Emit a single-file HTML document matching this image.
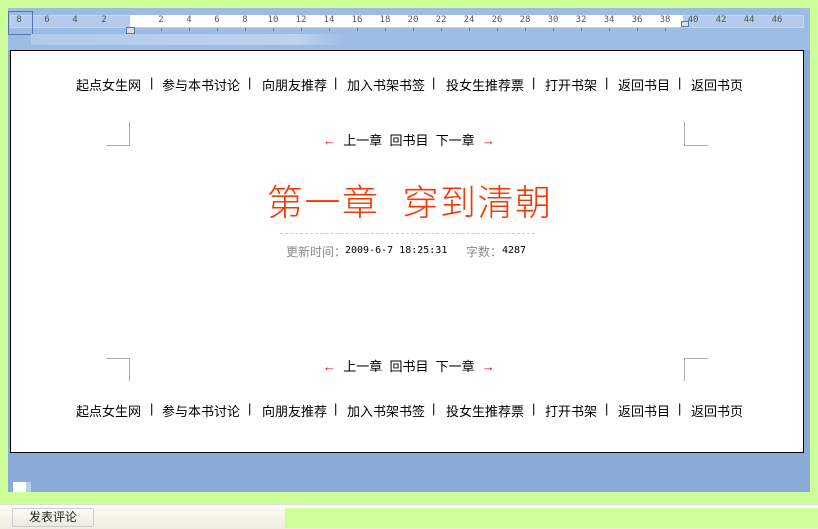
<!DOCTYPE html>
<html><head><meta charset="utf-8"><style>
*{margin:0;padding:0}
body{width:818px;height:528px;background:#ccff99;position:relative;overflow:hidden;font-family:"Liberation Sans","Noto Sans CJK SC","WenQuanYi Zen Hei",sans-serif}
.a{position:absolute}
.frame{left:8px;top:8px;width:802px;height:484px;background:#8aabd6}
.top{left:8px;top:8px;width:802px;height:42px;background:#9dbce4}
.num{position:absolute;top:15px;font-size:9px;color:#555;font-family:"DejaVu Sans Mono","Liberation Mono",monospace;transform:translateX(-50%)}
.tick{position:absolute;top:28px;width:1px;height:3px;background:#777}
.page{left:10px;top:50px;width:792px;height:401px;background:#fff;border:1px solid #000}
.nav{font-size:13px;color:#000;top:75px;white-space:nowrap}
.nav2{top:401px}
.cm{background:#aaa}
.mono{font-family:"DejaVu Sans Mono","Liberation Mono",monospace;font-size:10px}
</style></head><body>
<div class="a frame"></div>
<div class="a top"></div>
<div class="a" style="left:10px;top:15px;width:792px;height:11px;background:#b4cbeb;border:1px solid #c7d7ee"></div>
<div class="a" style="left:130px;top:15px;width:553px;height:12px;background:#fff;border-bottom:1px solid #ccd"></div>
<div class="a" style="left:8px;top:11px;width:23px;height:22px;border:1px solid #5577aa"></div>
<div class="a" style="left:31px;top:34px;width:315px;height:11px;background:linear-gradient(90deg,#b2cbeb,#bcd2ef 85%,#9dbce4)"></div>
<div class="a" style="left:126px;top:27px;width:7px;height:5px;border:1px solid #5577aa;background:#ddd"></div>
<div class="a" style="left:681px;top:21px;width:6px;height:4px;border:1px solid #5577aa;background:#ddd"></div>
<div id="r"></div>
<div class="a page"></div>
<div class="a nav" style="left:76px">起点女生网</div><div class="a nav" style="left:150px">|</div><div class="a nav" style="left:162px">参与本书讨论</div><div class="a nav" style="left:248px">|</div><div class="a nav" style="left:262px">向朋友推荐</div><div class="a nav" style="left:334px">|</div><div class="a nav" style="left:347px">加入书架书签</div><div class="a nav" style="left:432px">|</div><div class="a nav" style="left:446px">投女生推荐票</div><div class="a nav" style="left:532px">|</div><div class="a nav" style="left:545px">打开书架</div><div class="a nav" style="left:605px">|</div><div class="a nav" style="left:618px">返回书目</div><div class="a nav" style="left:678px">|</div><div class="a nav" style="left:691px">返回书页</div>
<div class="a nav nav2" style="left:76px">起点女生网</div><div class="a nav nav2" style="left:150px">|</div><div class="a nav nav2" style="left:162px">参与本书讨论</div><div class="a nav nav2" style="left:248px">|</div><div class="a nav nav2" style="left:262px">向朋友推荐</div><div class="a nav nav2" style="left:334px">|</div><div class="a nav nav2" style="left:347px">加入书架书签</div><div class="a nav nav2" style="left:432px">|</div><div class="a nav nav2" style="left:446px">投女生推荐票</div><div class="a nav nav2" style="left:532px">|</div><div class="a nav nav2" style="left:545px">打开书架</div><div class="a nav nav2" style="left:605px">|</div><div class="a nav nav2" style="left:618px">返回书目</div><div class="a nav nav2" style="left:678px">|</div><div class="a nav nav2" style="left:691px">返回书页</div>
<div class="a" style="left:323px;top:130px;font-size:13px;white-space:nowrap"><span style="color:red">←</span>&nbsp; 上一章&nbsp; 回书目&nbsp; 下一章&nbsp; <span style="color:red">→</span></div>
<div class="a" style="left:323px;top:356px;font-size:13px;white-space:nowrap"><span style="color:red">←</span>&nbsp; 上一章&nbsp; 回书目&nbsp; 下一章&nbsp; <span style="color:red">→</span></div>
<div class="a" style="left:267px;top:181px;font-size:36px;color:#ff3300;white-space:nowrap;line-height:44px;letter-spacing:1.5px;font-weight:300">第一章&nbsp;&nbsp;穿到清朝</div>
<div class="a" style="left:280px;top:233px;width:255px;border-top:1px dashed #ccc"></div>
<div class="a" style="left:286px;top:243px;font-size:12px;color:#888;white-space:nowrap">更新时间：</div>
<div class="a mono" style="left:345px;top:245px;white-space:nowrap">2009-6-7 18:25:31</div>
<div class="a" style="left:466px;top:243px;font-size:12px;color:#888;white-space:nowrap">字数：</div>
<div class="a mono" style="left:502px;top:245px">4287</div>
<div class="a cm" style="left:129px;top:122px;width:1px;height:23px"></div><div class="a cm" style="left:106px;top:145px;width:24px;height:1px"></div>
<div class="a cm" style="left:684px;top:122px;width:1px;height:23px"></div><div class="a cm" style="left:684px;top:145px;width:24px;height:1px"></div>
<div class="a cm" style="left:129px;top:358px;width:1px;height:23px"></div><div class="a cm" style="left:106px;top:358px;width:24px;height:1px"></div>
<div class="a cm" style="left:684px;top:358px;width:1px;height:23px"></div><div class="a cm" style="left:684px;top:358px;width:24px;height:1px"></div>
<div class="a" style="left:13px;top:482px;width:13px;height:10px;background:#fff"></div>
<div class="a" style="left:26px;top:482px;width:5px;height:10px;background:#b8cdee"></div>
<div class="a" style="left:0;top:504px;width:818px;height:24px;background:linear-gradient(#fdfcf5,#efece0);border-top:1px solid #ddd"></div>
<div class="a" style="left:285px;top:508px;width:533px;height:20px;background:#ccff99"></div>
<div class="a" style="left:12px;top:508px;width:80px;height:17px;border:1px solid #ccc;border-radius:2px;background:linear-gradient(#fdfdf8,#eceae0);font-size:12px;text-align:center;line-height:17px;color:#222">发表评论</div>
<script>
var h='',p=[[16,8],[44,6],[72,4],[101,2],[158,2],[186,4],[214,6],[242,8],[270,10],[298,12],[326,14],[354,16],[382,18],[410,20],[438,22],[466,24],[494,26],[522,28],[550,30],[578,32],[606,34],[634,36],[662,38],[690,40],[718,42],[746,44],[774,46]];
p.forEach(function(a){h+='<div class="num" style="left:'+(a[0]+3)+'px">'+a[1]+'</div>';if(a[0]>140&&a[0]<680)h+='<div class="tick" style="left:'+(a[0]+3)+'px"></div>';});
document.getElementById('r').innerHTML=h;
</script>
</body></html>
